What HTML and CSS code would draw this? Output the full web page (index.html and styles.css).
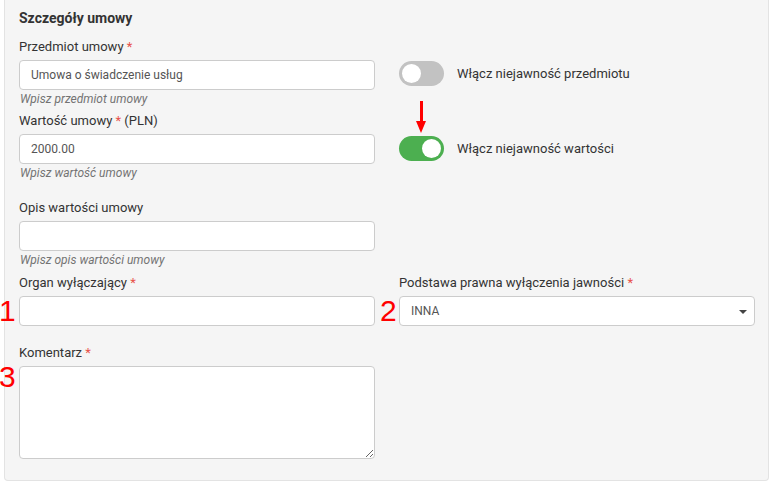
FILE: index.html
```html
<!DOCTYPE html>
<html lang="pl">
<head>
<meta charset="utf-8">
<title>Szczegóły umowy</title>
<link rel="stylesheet" href="styles.css">
</head>
<body>
<div class="panel">
  <h3 class="panel-title">Szczegóły umowy</h3>

  <div class="row row-1">
    <div class="group">
      <label class="label">Przedmiot umowy <span class="req">*</span></label>
      <input class="control" type="text" value="Umowa o świadczenie usług">
      <div class="help">Wpisz przedmiot umowy</div>
    </div>
    <div class="switch-cell">
      <span class="switch"><span class="knob"></span></span>
      <span class="switch-label">Włącz niejawność przedmiotu</span>
    </div>
  </div>

  <div class="row row-2">
    <div class="group">
      <label class="label">Wartość umowy <span class="req">*</span> (PLN)</label>
      <input class="control" type="text" value="2000.00">
      <div class="help">Wpisz wartość umowy</div>
    </div>
    <div class="switch-cell switch-cell-2">
      <span class="switch on"><span class="knob"></span>
        <span class="arrow"><span class="shaft"></span><span class="head"></span></span>
      </span>
      <span class="switch-label">Włącz niejawność wartości</span>
    </div>
  </div>

  <div class="row row-3">
    <div class="group">
      <label class="label">Opis wartości umowy</label>
      <input class="control" type="text" value="">
      <div class="help">Wpisz opis wartości umowy</div>
    </div>
    <div></div>
  </div>

  <div class="row row-4">
    <div class="group">
      <label class="label">Organ wyłączający <span class="req">*</span></label>
      <div class="field-wrap">
        <span class="mark mark-left">1</span>
        <input class="control" type="text" value="">
      </div>
    </div>
    <div class="group">
      <label class="label">Podstawa prawna wyłączenia jawności <span class="req">*</span></label>
      <div class="field-wrap">
        <span class="mark mark-left2">2</span>
        <div class="control select">
          <span>INNA</span>
          <span class="caret"></span>
        </div>
      </div>
    </div>
  </div>

  <div class="row row-5">
    <div class="group">
      <label class="label">Komentarz <span class="req">*</span></label>
      <div class="field-wrap">
        <span class="mark mark-left3">3</span>
        <textarea class="control textarea"></textarea>
      </div>
    </div>
    <div></div>
  </div>
</div>
</body>
</html>
```

FILE: styles.css
```css
* { box-sizing: border-box; }

html, body {
  margin: 0;
  padding: 0;
  background: #ffffff;
  font-family: Roboto, "Liberation Sans", Arial, sans-serif;
  color: #333333;
}

.panel {
  position: relative;
  margin-left: 4px;
  width: 765px;
  height: 481px;
  background: #f5f5f5;
  border: 1px solid #e3e3e3;
  border-top: 0;
  border-radius: 0 0 4px 4px;
  padding: 10px 14px 0 14px;
}

.panel-title {
  margin: 0 0 11px 0;
  font-size: 14px;
  line-height: 17px;
  font-weight: 700;
  color: #333333;
}

.row {
  display: grid;
  grid-template-columns: 356px 356px;
  column-gap: 24px;
  align-items: start;
}

.row-2 { margin-top: 5px; }
.row-3 { margin-top: 18px; }
.row-4 { margin-top: 6px; }
.row-5 { margin-top: 18px; }

.group {
  display: flex;
  flex-direction: column;
}

.label {
  display: block;
  font-size: 13px;
  line-height: 18px;
  margin-bottom: 4px;
  color: #333333;
}

.req { color: #e8514a; }

.control {
  display: block;
  width: 356px;
  height: 30px;
  margin: 0;
  padding: 0 11px;
  font-family: Roboto, "Liberation Sans", Arial, sans-serif;
  font-size: 12px;
  color: #555555;
  background: #ffffff;
  border: 1px solid #cccccc;
  border-radius: 4px;
  outline: none;
}

.help {
  margin-top: 2px;
  font-size: 12px;
  line-height: 15px;
  font-style: italic;
  color: #737373;
  padding-left: 1px;
}

.field-wrap { position: relative; }

.select {
  display: flex;
  align-items: center;
  justify-content: space-between;
  padding: 0 7px 0 11px;
}

.caret {
  width: 0;
  height: 0;
  border-left: 4px solid transparent;
  border-right: 4px solid transparent;
  border-top: 4px solid #444444;
  margin-top: 1px;
}

.textarea {
  height: 93px;
  resize: vertical;
  padding: 6px 11px;
}

/* switches */
.switch-cell {
  display: flex;
  align-items: center;
  padding-top: 23px;
  gap: 13px;
}

.switch-cell-2 { padding-top: 24px; }

.switch {
  position: relative;
  display: inline-block;
  width: 45px;
  height: 25px;
  border-radius: 13px;
  background: #c2c2c2;
  flex: none;
}

.switch .knob {
  position: absolute;
  top: 3px;
  left: 3px;
  width: 19px;
  height: 19px;
  border-radius: 50%;
  background: #ffffff;
}

.switch.on { background: #4caf50; }
.switch.on .knob { left: 23px; }

.switch-label {
  font-size: 13px;
  line-height: 18px;
  color: #333333;
}

/* annotation overlays */
.arrow {
  position: absolute;
  left: 17px;
  top: -35px;
  width: 10px;
  height: 33px;
}

.arrow .shaft {
  position: absolute;
  left: 4px;
  top: 0;
  width: 3px;
  height: 22px;
  background: #ff0000;
}

.arrow .head {
  position: absolute;
  left: 0;
  top: 20px;
  width: 0;
  height: 0;
  border-left: 5.5px solid transparent;
  border-right: 5.5px solid transparent;
  border-top: 12px solid #ff0000;
}

.mark {
  position: absolute;
  font-family: "Liberation Sans", Arial, sans-serif;
  font-size: 30px;
  line-height: 30px;
  color: #ff0000;
}

.mark-left { left: -20px; top: 0px; }
.mark-left2 { left: -19px; top: 0px; }
.mark-left3 { left: -20px; top: -4px; }
```
